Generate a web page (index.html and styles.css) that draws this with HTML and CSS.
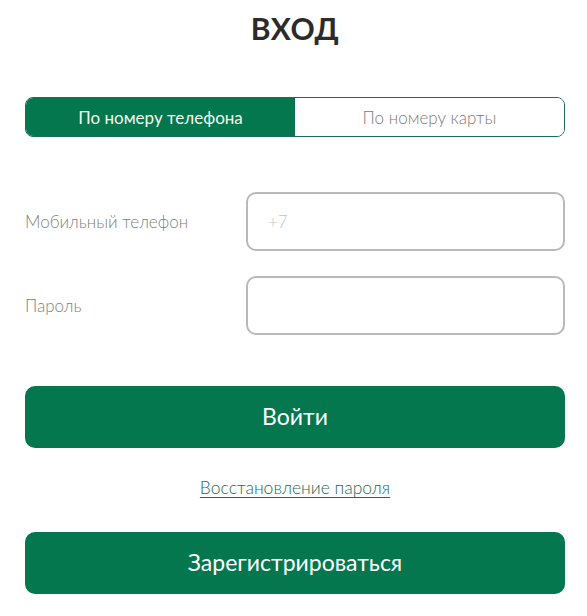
FILE: index.html
```html
<!DOCTYPE html>
<html lang="ru">
<head>
<meta charset="utf-8">
<title>Вход</title>
<link rel="stylesheet" href="styles.css">
</head>
<body>
<main class="login">
  <h1 class="title">ВХОД</h1>
  <div class="tabs">
    <div class="tab tab-active">По номеру телефона</div>
    <div class="tab">По номеру карты</div>
  </div>
  <form class="form">
    <div class="row">
      <label class="label" for="phone">Мобильный телефон</label>
      <input class="input" id="phone" type="text" placeholder="+7">
    </div>
    <div class="row">
      <label class="label" for="pass">Пароль</label>
      <input class="input" id="pass" type="password">
    </div>
  </form>
  <button class="btn btn-login" type="button">Войти</button>
  <div class="restore"><a href="#" class="restore-link">Восстановление пароля</a></div>
  <button class="btn btn-register" type="button">Зарегистрироваться</button>
</main>
</body>
</html>
```
FILE: styles.css
```css
* { box-sizing: border-box; }
html, body { margin: 0; padding: 0; background: #fff; }
body {
  font-family: "Lato", "Open Sans", "Liberation Sans", sans-serif;
  font-weight: 300;
  color: #333;
}
.login {
  width: 540px;
  margin-left: 25px;
  display: flex;
  flex-direction: column;
}
.title {
  margin: 0;
  padding-top: 10px;
  font-size: 30px;
  line-height: 36px;
  font-weight: 700;
  text-align: center;
  color: #2b2b2b;
  letter-spacing: 0.5px;
}
.tabs {
  margin-top: 51px;
  height: 40px;
  display: flex;
  border: 1px solid #1b6b5a;
  border-radius: 8px;
  overflow: hidden;
}
.tab {
  flex: 1;
  display: flex;
  align-items: center;
  justify-content: center;
  font-size: 17px;
  color: #7a7a7a;
  background: #fff;
}
.tab-active {
  background: #04774f;
  color: #f4f8ee;
  font-weight: 400;
}
.form {
  margin-top: 55px;
  display: flex;
  flex-direction: column;
  gap: 25px;
}
.row {
  display: flex;
  align-items: center;
}
.label {
  width: 221px;
  font-size: 17px;
  color: #808080;
}
.input {
  width: 319px;
  height: 59px;
  border: 2px solid #b9b9b9;
  border-radius: 10px;
  padding: 0 20px;
  font-family: inherit;
  font-weight: 300;
  font-size: 17px;
  color: #555;
  outline: none;
}
.input::placeholder { color: #c4c4c4; }
.btn {
  height: 62px;
  border: none;
  border-radius: 10px;
  background: #04774f;
  color: #fff;
  font-family: inherit;
  font-weight: 400;
  font-size: 23px;
  padding-bottom: 3px;
  cursor: pointer;
}
.btn-login { margin-top: 51px; }
.restore {
  margin-top: 30px;
  text-align: center;
  line-height: 20px;
}
.restore-link {
  font-size: 17.5px;
  color: #1d6a58;
  text-decoration: underline;
  text-decoration-thickness: 1px;
  text-underline-offset: 3px;
}
.btn-register { margin-top: 34px; }
```
